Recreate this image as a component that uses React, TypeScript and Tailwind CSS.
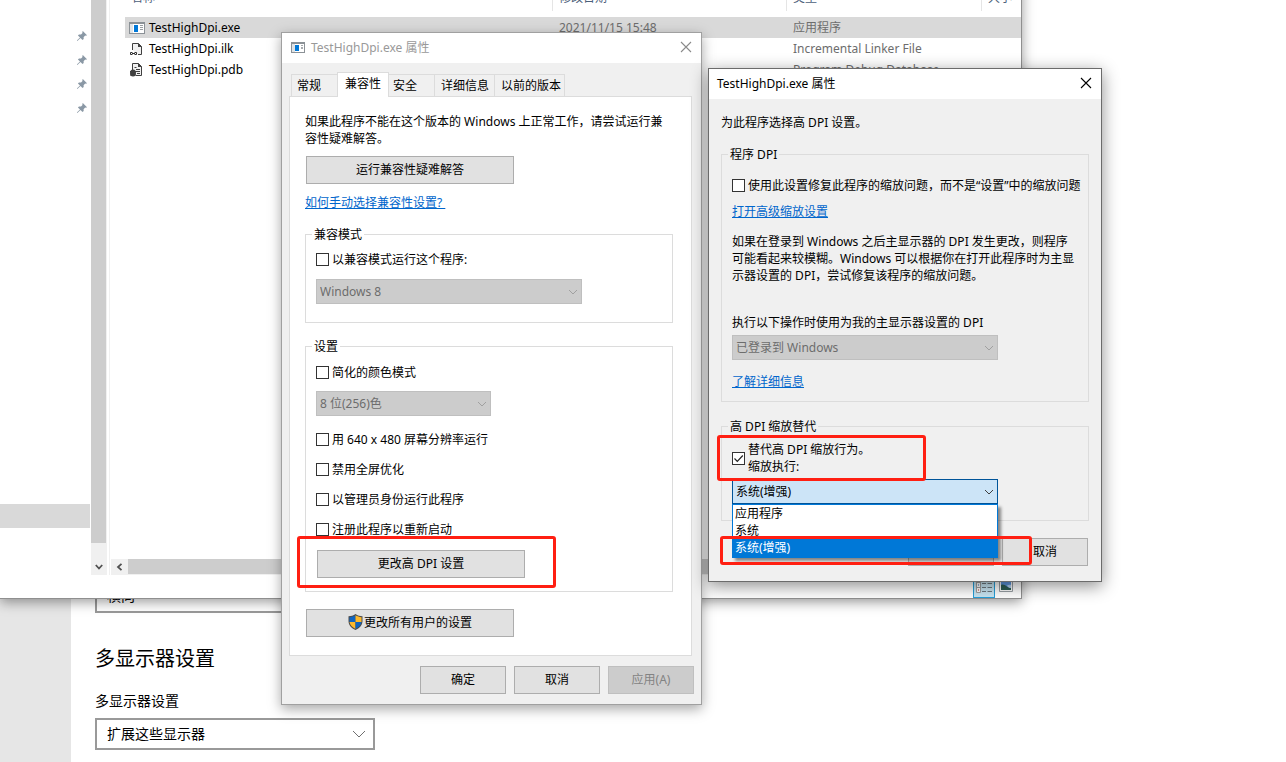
import { useState, type ReactNode } from 'react';
import clsx from 'clsx';

const FILES = [
  { name: 'TestHighDpi.exe', date: '2021/11/15 15:48', type: '应用程序', icon: 'exe' },
  { name: 'TestHighDpi.ilk', date: '', type: 'Incremental Linker File', icon: 'ilk' },
  { name: 'TestHighDpi.pdb', date: '', type: 'Program Debug Database', icon: 'pdb' },
];

const OVERRIDES = ['应用程序', '系统', '系统(增强)'];

function ExeIcon({ className }: { className?: string }) {
  return (
    <svg className={className} viewBox="0 0 16 12" shapeRendering="crispEdges" aria-hidden="true">
      <rect width="16" height="12" fill="#8b9196" />
      <rect x="1" y="2" width="14" height="9" fill="#fff" />
      <rect x="1" y="2" width="3" height="9" fill="#dfe3e6" />
      <rect x="5" y="3" width="4" height="7" fill="#0078d7" />
      <path d="M11 3.5h3M11 5.5h3M11 7.5h3" stroke="#9a9fa3" />
    </svg>
  );
}

function LinkerIcon() {
  return (
    <svg className="h-4 w-4" viewBox="0 0 16 16" fill="none" aria-hidden="true">
      <path d="M3.5 9V2.5h6l3 3v8H9" fill="#f1f1f1" stroke="#404040" />
      <path d="M9 2v4h4z" fill="#404040" />
      <path d="M3.5 11.5h-2v2h2M5.5 11.5h2v2h-2M3 12.5h3" stroke="#303030" />
    </svg>
  );
}

function DatabaseIcon() {
  return (
    <svg className="h-4 w-4" viewBox="0 0 16 16" fill="none" aria-hidden="true">
      <path d="M3.5 9V1.5h6l3 3v9H7" fill="#f1f1f1" stroke="#404040" />
      <path d="M9 1v4h4z" fill="#404040" />
      <path d="M5.5 5.5h2M7 7.500h4M7 9.500h4M8 11.500h3" stroke="#404040" />
      <ellipse cx="4" cy="11" rx="3" ry="3.500" fill="#404040" />
      <path d="M1 9.500h6M1 13h6" stroke="#404040" />
    </svg>
  );
}

function PinIcon() {
  return (
    <svg className="h-[10px] w-[10px]" viewBox="0 0 10 10" aria-hidden="true">
      <path d="M5.800 0l4.200 4.200-1 .6-.8-.2L6.600 6.200l.1 1.800-1.200 1L3.500 7 .6 9.800 0 9.900l.1-.7L3 6.400.9 4.400l1.100-1 2 .1 1.500-1.600-.2-1z" fill="#8a98a5" />
    </svg>
  );
}

function ShieldIcon() {
  return (
    <svg className="h-4 w-[15px]" viewBox="0 0 15 16" aria-hidden="true">
      <path d="M7.500 0C5.500 1.500 3 2.200.5 2.200V7c0 4.200 3 7.200 7 9 4-1.800 7-4.800 7-9V2.200C12 2.200 9.500 1.500 7.500 0z" fill="#4d4d4d" />
      <path d="M7.500 1.300C5.700 2.500 3.700 3.100 1.500 3.200V8h6z" fill="#0f64c0" />
      <path d="M7.500 1.300c1.800 1.200 3.800 1.800 6 1.900V8h-6z" fill="#fdb92c" />
      <path d="M1.500 8c.4 3 2.700 5.300 6 6.900V8z" fill="#fdb92c" />
      <path d="M13.500 8c-.4 3-2.700 5.300-6 6.900V8z" fill="#0f64c0" />
    </svg>
  );
}

function Chevron({ className, wide }: { className?: string; wide?: boolean }) {
  return (
    <svg
      className={clsx('pointer-events-none absolute top-1/2 -translate-y-1/2', wide ? 'right-[9px] h-2 w-[14px]' : 'right-1 h-2 w-[10px]', className)}
      viewBox={wide ? '0 0 14 8' : '0 0 10 8'}
      fill="none"
      stroke="currentColor"
      aria-hidden="true"
    >
      <path d={wide ? 'M1 1l6 6 6-6' : 'M1 2l4 4 4-4'} />
    </svg>
  );
}

function CloseButton({ active }: { active?: boolean }) {
  return (
    <button aria-label="关闭" className={clsx('flex w-[30px] items-center justify-center', active ? 'text-black' : 'text-[#8a8a8a]')}>
      <svg className="h-3 w-3" viewBox="0 0 12 12" fill="none" stroke="currentColor" strokeWidth="1.100" aria-hidden="true">
        <path d="M1 1l10 10M11 1L1 11" />
      </svg>
    </button>
  );
}

function PushButton({ children, className, disabled }: { children?: ReactNode; className?: string; disabled?: boolean }) {
  return (
    <button
      disabled={disabled}
      className={clsx(
        'flex h-7 items-center justify-center border pb-[2px]',
        disabled ? 'border-[#bfbfbf] bg-[#cccccc] text-[#838383]' : 'border-[#adadad] bg-[#e1e1e1]',
        className
      )}
    >
      {children}
    </button>
  );
}

function CheckBox({ children, className, defaultChecked }: { children: ReactNode; className?: string; defaultChecked?: boolean }) {
  return (
    <label className={clsx('flex items-center gap-[3px] whitespace-nowrap', className)}>
      <span className="grid">
        <input
          type="checkbox"
          defaultChecked={defaultChecked}
          className="peer col-start-1 row-start-1 h-[13px] w-[13px] appearance-none border border-[#333333] bg-white"
        />
        <svg
          className="pointer-events-none invisible col-start-1 row-start-1 h-[13px] w-[13px] peer-checked:visible"
          viewBox="0 0 13 13"
          fill="none"
          stroke="#222"
          strokeWidth="1.200"
          aria-hidden="true"
        >
          <path d="M2.500 6.500l2.800 2.800 5.500-5.800" />
        </svg>
      </span>
      <span>{children}</span>
    </label>
  );
}

function DisabledSelect({ value, label, className }: { value: string; label: string; className: string }) {
  return (
    <div className={clsx('relative', className)}>
      <select disabled aria-label={label} className="block h-[25px] w-full appearance-none border border-[#bfbfbf] bg-[#cccccc] pl-[3px] text-[#6d6d6d] opacity-100">
        <option>{value}</option>
      </select>
      <Chevron className="text-[#a0a0a0]" />
    </div>
  );
}

function Group({ title, children, className }: { title: string; children: ReactNode; className?: string }) {
  return (
    <fieldset className={clsx('border border-[#dcdcdc] pl-[10px]', className)}>
      <legend className="-ml-1 px-[2px]">{title}</legend>
      {children}
    </fieldset>
  );
}

function SettingsPage() {
  return (
    <div className="flex min-h-screen bg-white text-sm">
      <aside className="w-[71px] bg-[#e6e6e6]" />
      <main className="flex flex-1 flex-col justify-end pb-3 pl-6">
        <select aria-label="方向" className="block h-8 w-[280px] appearance-none border-2 border-[#999999] pb-[2px] pl-[10px]">
          <option>横向</option>
        </select>
        <h2 className="mt-8 text-xl leading-7">多显示器设置</h2>
        <label htmlFor="displays" className="mt-[18px] leading-5">
          多显示器设置
        </label>
        <div className="relative mt-[7px] w-[280px]">
          <select id="displays" className="block h-8 w-full appearance-none border-2 border-[#999999] pl-[10px]">
            <option>扩展这些显示器</option>
          </select>
          <Chevron wide className="text-[#707070]" />
        </div>
      </main>
    </div>
  );
}

function ExplorerWindow() {
  return (
    <section className="absolute -top-4 left-0 w-[1022px] border-r border-b border-[#8f8f8f] bg-white shadow-[0_3px_12px_rgba(0,0,0,0.4)]">
      <div className="flex min-h-[591px]">
        <nav className="flex w-[91px] flex-col pr-px">
          <ul className="mt-10 flex-1">
            {[0, 1, 2, 3].map((i) => (
              <li key={i} className="flex h-6 items-center justify-end pr-[3px]">
                <PinIcon />
              </li>
            ))}
          </ul>
          <div className="mb-[47px] h-6 bg-[#d9d9d9]" />
        </nav>
        <div className="mr-[2px] flex w-4 flex-col bg-[#f0f0f0] pr-px">
          <div className="flex-1 bg-[#cdcdcd]" />
          <div className="flex h-8 items-end justify-center pb-1">
            <svg className="h-2 w-2" viewBox="0 0 8 8" fill="none" stroke="#505050" strokeWidth="1.800" aria-hidden="true">
              <path d="M.8 2L4 5.500 7.200 2" />
            </svg>
          </div>
        </div>
        <div className="flex flex-1 flex-col border-l border-[#f0f0f0]">
          <div className="flex-1 pl-[15px]">
            <table className="w-full table-fixed text-left">
              <colgroup>
                <col className="w-[428px]" />
                <col className="w-[234px]" />
                <col className="w-[195px]" />
                <col />
              </colgroup>
              <thead>
                <tr className="text-[#4c607a]">
                  {['名称', '修改日期', '类型', '大小'].map((title, i) => (
                    <th key={title} className="h-[33px] p-0 align-top font-normal">
                      <span className={clsx('flex h-[27px] items-center pl-[6px]', i < 3 && 'border-r border-[#e5e5e5]')}>{title}</span>
                    </th>
                  ))}
                </tr>
              </thead>
              <tbody>
                {FILES.map((file, i) => (
                  <tr key={file.name} className={clsx('text-[#6d6d6d]', i === 0 && 'bg-[#d9d9d9]')}>
                    <td className="h-[21px] p-0">
                      <span className="flex items-center gap-1 pl-1 text-black">
                        {file.icon === 'exe' && <ExeIcon className="h-3 w-4" />}
                        {file.icon === 'ilk' && <LinkerIcon />}
                        {file.icon === 'pdb' && <DatabaseIcon />}
                        {file.name}
                      </span>
                    </td>
                    <td className="p-0 pl-[6px]">{file.date}</td>
                    <td className="p-0 pl-[6px] whitespace-nowrap">{file.type}</td>
                    <td />
                  </tr>
                ))}
              </tbody>
            </table>
          </div>
          <div className="ml-px flex h-4 bg-[#f0f0f0] pb-px">
            <div className="flex w-[17px] items-center justify-center">
              <svg className="h-2 w-2" viewBox="0 0 8 8" fill="none" stroke="#505050" strokeWidth="1.800" aria-hidden="true">
                <path d="M5.500 .8L2 4 5.500 7.200" />
              </svg>
            </div>
            <div className="mr-[100px] flex-1 bg-[#cdcdcd]" />
          </div>
        </div>
      </div>
      <footer className="flex h-[23px] justify-end gap-1 pr-2">
        <button aria-label="详细信息" className="flex w-[22px] items-center justify-center border border-[#26a0da] bg-[#c9e6f3] pb-1">
          <svg className="h-4 w-4" viewBox="0 0 16 16" fill="none" aria-hidden="true">
            <path d="M.5.5h4v15h-4zM.5 5.500h4M.5 10.500h4" fill="#fff" stroke="#a0a0a0" />
            <path d="M6 2.500h4M11.500 2.500H16M6 6.500h4M11.500 6.500H16M6 10.500h4M11.500 10.500H16M6 14.500h4M11.500 14.500H16" stroke="#6f7a80" />
            <path d="M2 3h1M2 8h1" stroke="#2f6fb0" />
            <path d="M2 13h1" stroke="#c03020" />
          </svg>
        </button>
        <button aria-label="大缩略图" className="flex w-[14px] items-center justify-center pb-[3px]">
          <svg className="h-4 w-[14px]" viewBox="0 0 14 16" fill="none" aria-hidden="true">
            <path d="M.5 2.500h13v12H.5z" fill="#fff" stroke="#9aa0a5" />
            <path d="M2 4h10v9H2z" fill="#5f98e0" />
            <path d="M2 8c2-1 4 0 6 1.500s3 1.500 4 1.500v2H2z" fill="#2d5f55" />
            <path d="M8 8.500c1.500-1 3-1 4-.5v3c-1.500 0-3-.5-4-2.500z" fill="#b5d3f2" />
          </svg>
        </button>
      </footer>
    </section>
  );
}

function PropertiesDialog() {
  return (
    <section className="absolute top-8 left-[281px] w-[421px] border border-[#a0a0a0] bg-[#f0f0f0] shadow-[0_4px_12px_rgba(0,0,0,0.35)]">
      <header className="flex h-[30px] items-stretch bg-white pb-[2px]">
        <div className="flex flex-1 items-center gap-[6px] pl-[9px] text-[#999999]">
          <ExeIcon className="h-[11px] w-[14px]" />
          TestHighDpi.exe 属性
        </div>
        <CloseButton />
      </header>
      <div className="px-[7px] pt-[9px] pb-[10px]">
        <div role="tablist" className="relative -mb-px flex items-end pl-[2px]">
          <button role="tab" className="h-[23px] w-[46px] border border-r-0 border-[#dcdcdc] pl-[5px] text-left">常规</button>
          <button role="tab" aria-selected="true" className="h-[25px] w-[52px] border border-b-0 border-[#dcdcdc] bg-white pb-[3px]">兼容性</button>
          <button role="tab" className="h-[23px] w-[46px] border border-l-0 border-[#dcdcdc] pl-1 text-left">安全</button>
          <button role="tab" className="h-[23px] w-[60px] border border-l-0 border-[#dcdcdc] pl-[6px] text-left">详细信息</button>
          <button role="tab" className="h-[23px] w-[70px] border border-l-0 border-[#dcdcdc] pl-[6px] text-left">以前的版本</button>
        </div>
        <div role="tabpanel" className="mr-[2px] border border-[#dcdcdc] bg-white pt-4 pr-[18px] pb-[18px] pl-[15px]">
          <p className="whitespace-nowrap">
            如果此程序不能在这个版本的 Windows 上正常工作，请尝试运行兼
            <br />
            容性疑难解答。
          </p>
          <PushButton className="mt-[9px] ml-px w-[208px]">运行兼容性疑难解答</PushButton>
          <a href="#help" className="mt-[10px] block w-fit whitespace-pre text-[#0066cc] underline">{'如何手动选择兼容性设置? '}</a>
          <Group title="兼容模式" className="mt-[15px] pt-2 pb-[18px]">
            <CheckBox>以兼容模式运行这个程序:</CheckBox>
            <DisabledSelect label="兼容模式" value="Windows 8" className="mt-[11px] w-[266px]" />
          </Group>
          <Group title="设置" className="mt-[15px] pt-[9px] pb-[13px]">
            <CheckBox>简化的颜色模式</CheckBox>
            <DisabledSelect label="颜色模式" value="8 位(256)色" className="mt-[10px] w-[175px]" />
            <div className="mt-[15px] flex flex-col gap-[13px]">
              <CheckBox>用 640 x 480 屏幕分辨率运行</CheckBox>
              <CheckBox>禁用全屏优化</CheckBox>
              <CheckBox>以管理员身份运行此程序</CheckBox>
              <CheckBox>注册此程序以重新启动</CheckBox>
            </div>
            <PushButton className="mt-3 ml-px w-[208px]">更改高 DPI 设置</PushButton>
          </Group>
          <PushButton className="mt-[17px] ml-px w-[208px] gap-px">
            <ShieldIcon />
            更改所有用户的设置
          </PushButton>
        </div>
        <div className="mt-[10px] flex justify-end gap-2">
          <PushButton className="w-[86px]">确定</PushButton>
          <PushButton className="w-[86px]">取消</PushButton>
          <PushButton className="w-[86px]" disabled>
            应用(A)
          </PushButton>
        </div>
      </div>
    </section>
  );
}

function DpiDialog() {
  const [override, setOverride] = useState('系统(增强)');

  return (
    <section className="absolute top-[68px] left-[708px] w-[394px] border border-[#6b6b6b] bg-[#f0f0f0] shadow-[0_4px_16px_rgba(0,0,0,0.45)]">
      <header className="flex h-[30px] items-stretch bg-white pb-[2px]">
        <div className="flex flex-1 items-center pl-2">TestHighDpi.exe 属性</div>
        <CloseButton active />
      </header>
      <div className="px-3 pt-[15px] pb-[15px]">
        <p>为此程序选择高 DPI 设置。</p>
        <Group title="程序 DPI" className="mt-[15px] pt-[14px] pb-[11px]">
          <CheckBox>使用此设置修复此程序的缩放问题，而不是“设置”中的缩放问题</CheckBox>
          <a href="#scaling" className="mt-[9px] block w-fit text-[#0066cc] underline">打开高级缩放设置</a>
          <p className="mt-[13px] whitespace-nowrap">
            如果在登录到 Windows 之后主显示器的 DPI 发生更改，则程序
            <br />
            可能看起来较模糊。Windows 可以根据你在打开此程序时为主显
            <br />
            示器设置的 DPI，尝试修复该程序的缩放问题。
          </p>
          <p className="mt-[30px]">执行以下操作时使用为我的主显示器设置的 DPI</p>
          <DisabledSelect label="使用 DPI 的时机" value="已登录到 Windows" className="mt-1 w-[266px]" />
          <a href="#more" className="mt-[13px] block w-fit text-[#0066cc] underline">了解详细信息</a>
        </Group>
        <Group title="高 DPI 缩放替代" className="mt-4 pt-[6px] pb-4">
          <CheckBox defaultChecked>
            替代高 DPI 缩放行为。
            <br />
            缩放执行:
          </CheckBox>
          <div className="relative mt-1 w-[266px]">
            <select
              aria-label="缩放执行"
              value={override}
              onChange={(e) => setOverride(e.target.value)}
              className="block h-[25px] w-full appearance-none border border-[#005499] bg-[#cce4f7] pl-[3px]"
            >
              {OVERRIDES.map((name) => (
                <option key={name}>{name}</option>
              ))}
            </select>
            <Chevron className="text-[#404040]" />
            <ul role="listbox" className="absolute top-full left-0 z-10 w-full border border-b-2 border-[#0078d7] bg-white shadow-[3px_3px_3px_rgba(0,0,0,0.45)]">
              {OVERRIDES.map((name) => (
                <li
                  key={name}
                  role="option"
                  aria-selected={name === override}
                  onClick={() => setOverride(name)}
                  className={clsx('pl-[2px]', name === override && 'bg-[#0078d7] text-white')}
                >
                  {name}
                </li>
              ))}
            </ul>
          </div>
        </Group>
        <div className="mt-[17px] flex justify-end gap-2 pr-px">
          <PushButton className="w-[86px]">确定</PushButton>
          <PushButton className="w-[86px]">取消</PushButton>
        </div>
      </div>
    </section>
  );
}

function Highlight({ className }: { className: string }) {
  return <div className={clsx('pointer-events-none absolute z-20 rounded-[3px] border-[3px] border-[#ff1f12]', className)} />;
}

export default function App() {
  return (
    <div className="relative min-h-screen overflow-hidden bg-white font-['Noto_Sans','Noto_Sans_CJK_SC',sans-serif] text-xs leading-[17px] text-black">
      <SettingsPage />
      <ExplorerWindow />
      <PropertiesDialog />
      <DpiDialog />
      <Highlight className="top-[536px] left-[297px] h-[52px] w-[259px]" />
      <Highlight className="top-[435px] left-[717px] h-[46px] w-[209px]" />
      <Highlight className="top-[536px] left-[720px] h-[29px] w-[312px]" />
    </div>
  );
}
